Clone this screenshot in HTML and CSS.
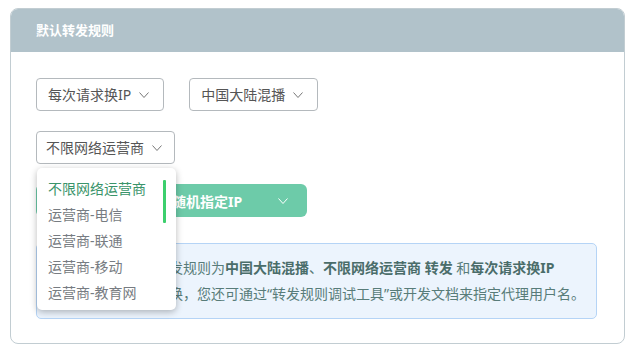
FILE: index.html
```html
<!DOCTYPE html>
<html lang="zh">
<head>
    <meta charset="UTF-8">
    <meta name="viewport" content="width=device-width, initial-scale=1.0">
    <title>默认转发规则</title>
    <link rel="stylesheet" href="styles.css">
</head>
<body>
    <div class="card">
        <div class="card-header">默认转发规则</div>

        <div class="card-body">
            <div class="row">
                <div class="select">
                    <span>每次请求换IP</span>
                    <svg class="arrow" width="10" height="6" viewBox="0 0 10 6"><polyline points="0.5,0.5 5,5.5 9.5,0.5" /></svg>
                </div>
                <div class="select">
                    <span>中国大陆混播</span>
                    <svg class="arrow" width="10" height="6" viewBox="0 0 10 6"><polyline points="0.5,0.5 5,5.5 9.5,0.5" /></svg>
                </div>
            </div>

            <div class="row">
                <div class="select-wrap">
                    <div class="select select-sm">
                        <span>不限网络运营商</span>
                        <svg class="arrow" width="10" height="6" viewBox="0 0 10 6"><polyline points="0.5,0.5 5,5.5 9.5,0.5" /></svg>
                    </div>
                    <!-- 下拉菜单 -->
                    <ul class="dropdown">
                        <li class="active">不限网络运营商</li>
                        <li>运营商-电信</li>
                        <li>运营商-联通</li>
                        <li>运营商-移动</li>
                        <li>运营商-教育网</li>
                        <span class="scroll-bar"></span>
                    </ul>
                </div>
            </div>

            <div class="row">
                <div class="btn-green">
                    <span class="btn-label">IP分配</span>
                    <span class="btn-value">随机指定IP</span>
                    <svg class="arrow arrow-white" width="10" height="6" viewBox="0 0 10 6"><polyline points="0.5,0.5 5,5.5 9.5,0.5" /></svg>
                </div>
            </div>

            <div class="info">
                <p>您当前账户默认转发规则为<b>中国大陆混播</b>、<b>不限网络运营商 转发</b> 和<b>每次请求换IP</b></p>
                <p>每次请求均自动更换，您还可通过“转发规则调试工具”或开发文档来指定代理用户名。</p>
            </div>
        </div>
    </div>
</body>
</html>
```

FILE: styles.css
```css
body {
    font-family: 'Noto Sans', 'Noto Sans CJK SC', sans-serif;
    margin: 0;
    background-color: #fff;
    font-size: 14px;
}
.card {
    margin: 8px 11px 0 10px;
    border: 1px solid #c2cdd2;
    border-radius: 8px;
    overflow: hidden;
    height: 336px;
    box-sizing: border-box;
}
.card-header {
    background-color: #b1c2ca;
    color: #fff;
    font-weight: bold;
    font-size: 13px;
    height: 43px;
    line-height: 43px;
    padding-left: 25px;
}
.card-body {
    padding: 26px 27px 0 25px;
}
.row {
    display: flex;
    gap: 25px;
    margin-bottom: 20px;
}
.select-wrap {
    position: relative;
}
.select {
    display: flex;
    align-items: center;
    gap: 8px;
    height: 33px;
    box-sizing: border-box;
    padding: 0 14px 0 11px;
    border: 1px solid #b4b9bd;
    border-radius: 4px;
    color: #555;
    line-height: 1;
}
.select-sm {
    padding: 0 12px 0 9px;
}
.arrow {
    fill: none;
    stroke: #777;
    stroke-width: 1;
}
.arrow-white {
    stroke: #fff;
}
.dropdown {
    position: absolute;
    top: 37px;
    left: 1px;
    width: 139px;
    height: 142px;
    box-sizing: border-box;
    margin: 0;
    padding: 8px 0 0 11px;
    list-style: none;
    background: #fff;
    border-radius: 5px;
    box-shadow: 0 2px 7px rgba(0,0,0,0.28);
    z-index: 10;
}
.dropdown li {
    line-height: 26px;
    color: #777c82;
}
.dropdown li.active {
    color: #3a946a;
}
.scroll-bar {
    position: absolute;
    left: 126px;
    top: 12px;
    width: 3px;
    height: 43px;
    background: #3ccf6d;
    border-radius: 1px;
}
.btn-green {
    display: flex;
    align-items: center;
    width: 271px;
    height: 33px;
    box-sizing: border-box;
    padding: 0 19px 0 12px;
    background-color: #6dcba9;
    border-radius: 6px;
    color: #fff;
    font-weight: bold;
}
.btn-label {
    width: 124px;
}
.btn-value {
    flex: 1;
}
.info {
    margin-top: 26px;
    width: 561px;
    box-sizing: border-box;
    padding: 11px 20px;
    background-color: #ecf4fd;
    border: 1px solid #b5d4f6;
    border-radius: 5px;
    color: #587c79;
}
.info p {
    margin: 0;
    line-height: 26px;
    white-space: nowrap;
}
.info b {
    color: #4a6d6a;
}
```
